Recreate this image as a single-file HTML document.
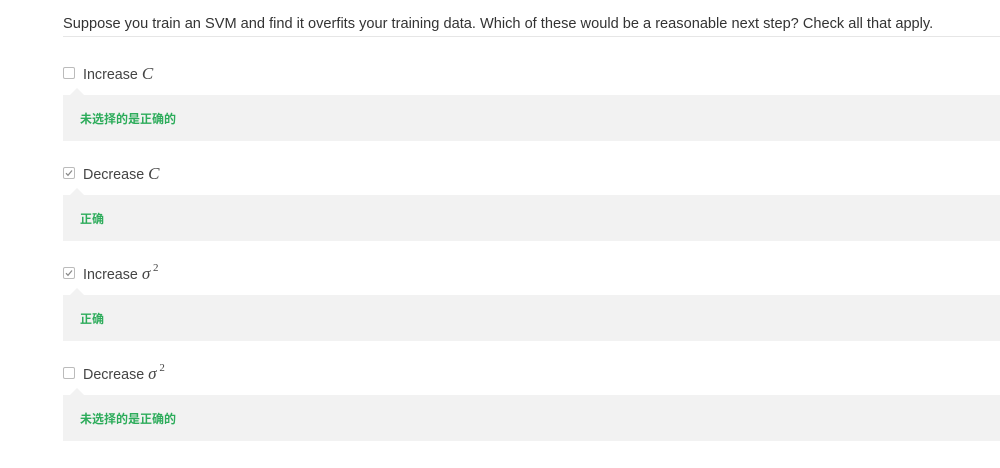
<!DOCTYPE html>
<html><head><meta charset="utf-8"><style>
body{margin:0;background:#fff;font-family:"Liberation Sans","Noto Sans CJK SC",sans-serif;color:#333;width:1000px;height:468px;overflow:hidden;position:relative}
.q{position:absolute;left:63px;top:16px;font-size:14.6px;white-space:nowrap;color:#333}
.hr{position:absolute;left:63px;right:0;top:36px;border-top:1px solid #e6e6e6}
.cb{position:absolute;left:63px;width:10px;height:10px;border:1px solid #bbb;border-radius:2px;background:#fff}
.cb svg{position:absolute;left:1px;top:1px}
.lb{position:absolute;left:83px;font-size:14.3px;color:#444;white-space:nowrap}
.lb i{font-family:"Liberation Serif",serif;font-size:17px}
.lb sup{font-family:"Liberation Serif",serif;font-size:11px;position:relative;top:-2px}
.box{position:absolute;left:63px;right:0;height:46px;background:#f2f2f2}
.box::before{content:"";position:absolute;left:7px;top:-7px;border:7px solid transparent;border-top:0;border-bottom:7px solid #f2f2f2}
.box span{position:absolute;left:17px;top:15px;font-size:12px;font-weight:bold;color:#2dac5b}
</style></head><body>
<div class="q">Suppose you train an SVM and find it overfits your training data. Which of these would be a reasonable next step? Check all that apply.</div>
<div class="hr"></div>

<div class="cb" style="top:67px"></div>
<div class="lb" style="top:64px">Increase <i>C</i></div>
<div class="box" style="top:95px"><span>未选择的是正确的</span></div>

<div class="cb" style="top:167px"><svg width="8" height="8" viewBox="0 0 8 8"><path d="M1 4.2L3 6.3L7 1.5" fill="none" stroke="#888" stroke-width="1.2"/></svg></div>
<div class="lb" style="top:164px">Decrease <i>C</i></div>
<div class="box" style="top:195px"><span>正确</span></div>

<div class="cb" style="top:267px"><svg width="8" height="8" viewBox="0 0 8 8"><path d="M1 4.2L3 6.3L7 1.5" fill="none" stroke="#888" stroke-width="1.2"/></svg></div>
<div class="lb" style="top:264px">Increase <i>σ</i><sup> 2</sup></div>
<div class="box" style="top:295px"><span>正确</span></div>

<div class="cb" style="top:367px"></div>
<div class="lb" style="top:364px">Decrease <i>σ</i><sup> 2</sup></div>
<div class="box" style="top:395px"><span>未选择的是正确的</span></div>
</body></html>
